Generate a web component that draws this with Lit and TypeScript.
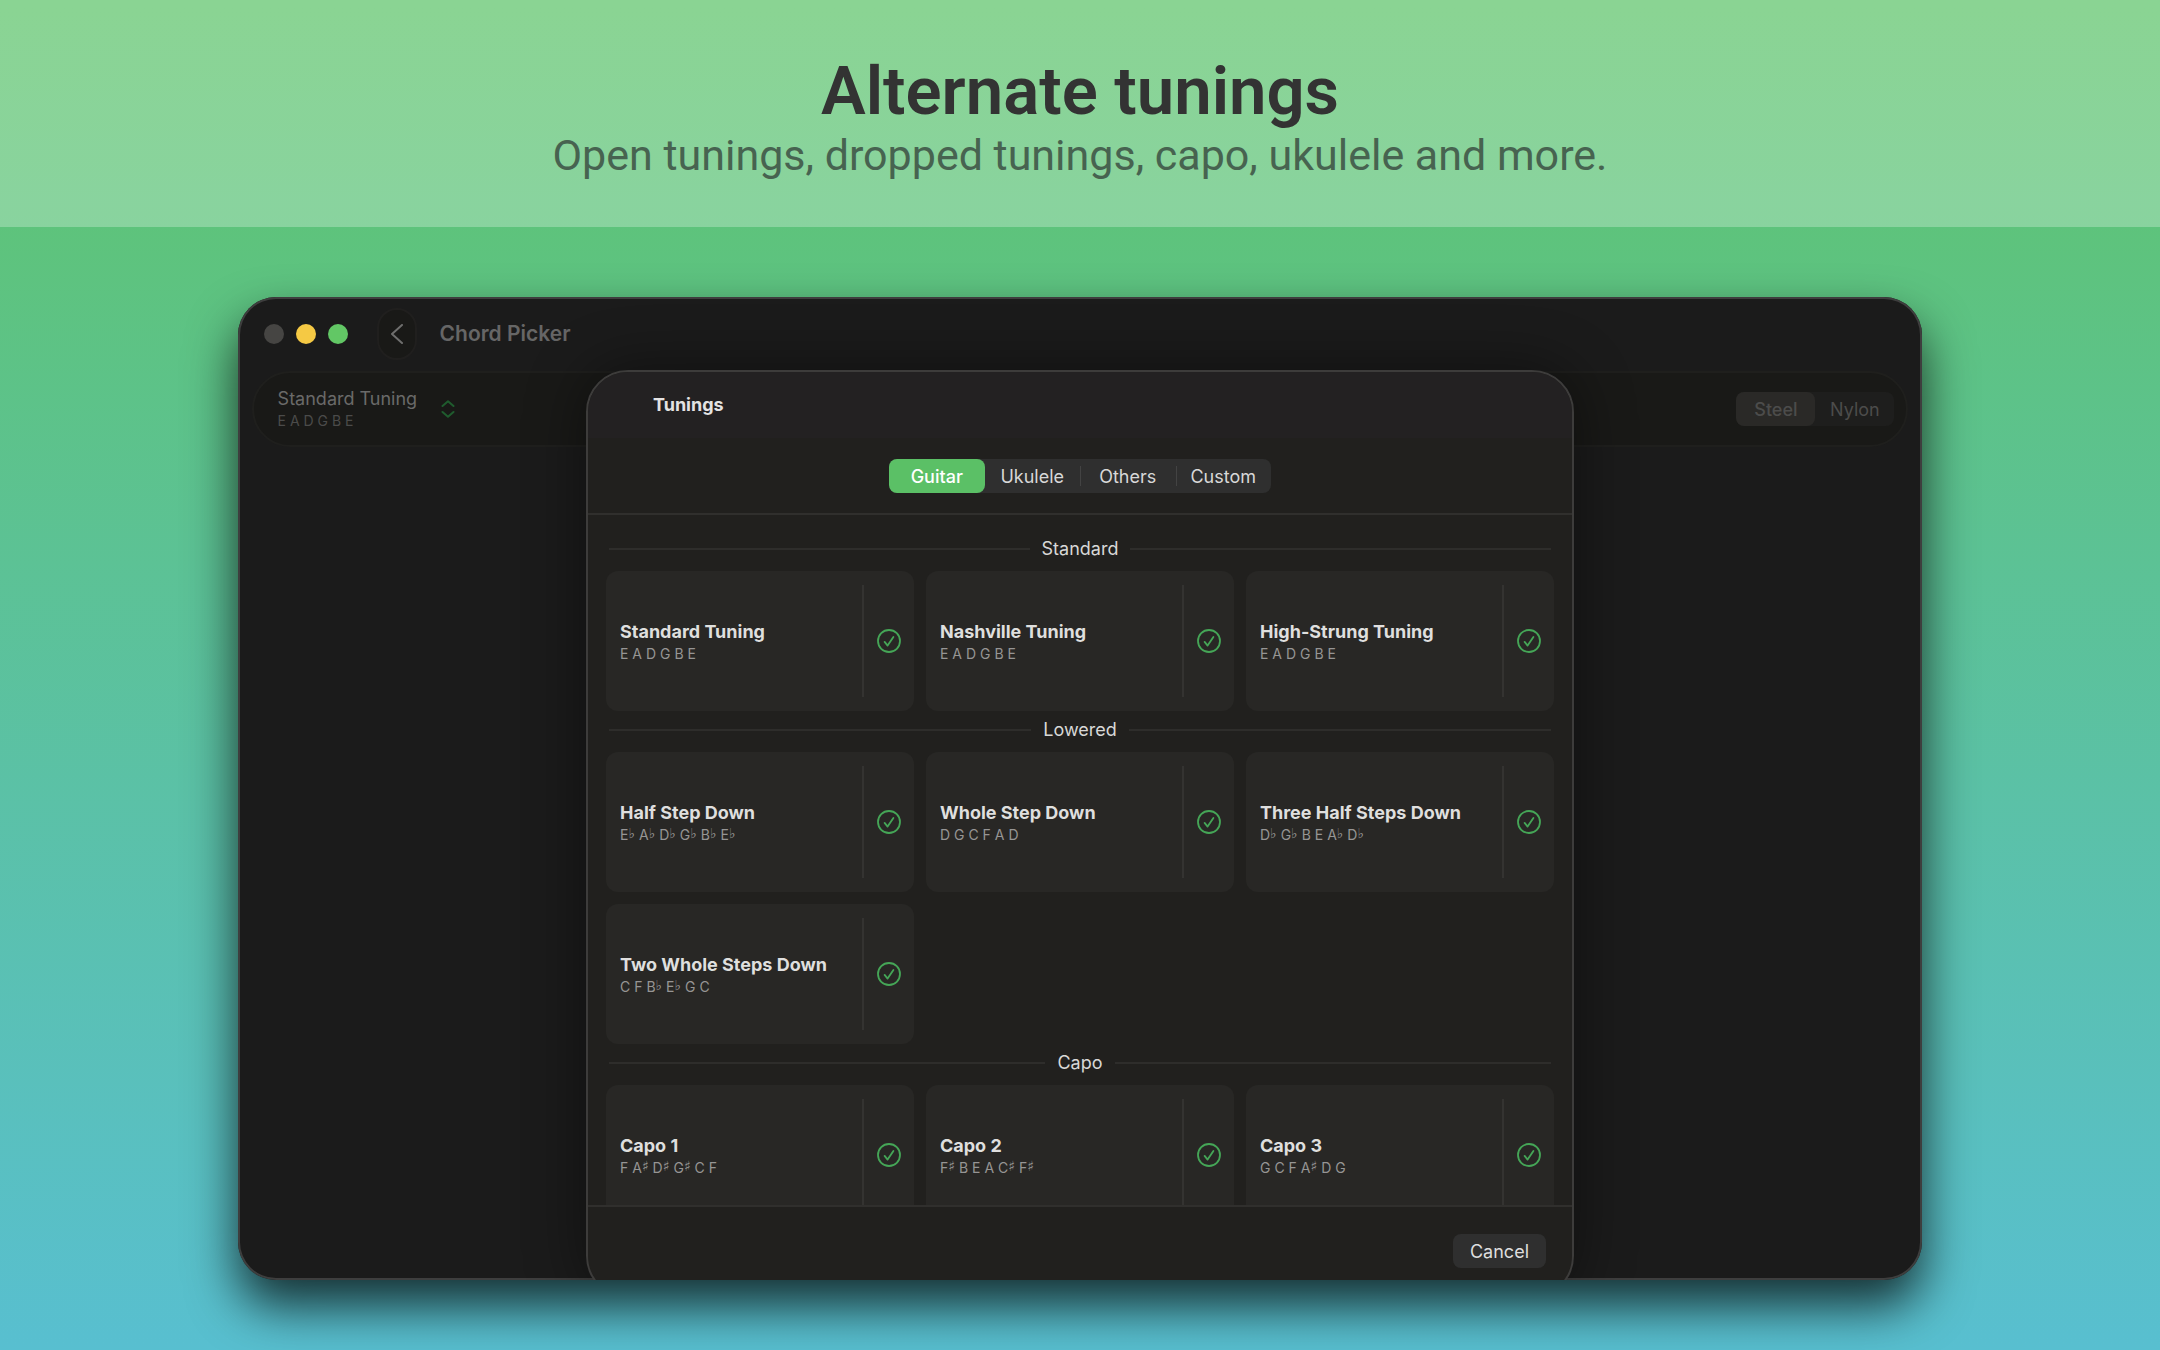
import { LitElement, html, css, svg } from "lit";
import { customElement, property, state } from "lit/decorators.js";
import { classMap } from "lit/directives/class-map.js";

interface Tuning {
  name: string;
  notes: string;
}

interface Section {
  title: string;
  tunings: Tuning[];
}

const SECTIONS: Section[] = [
  {
    title: "Standard",
    tunings: [
      { name: "Standard Tuning", notes: "E A D G B E" },
      { name: "Nashville Tuning", notes: "E A D G B E" },
      { name: "High-Strung Tuning", notes: "E A D G B E" },
    ],
  },
  {
    title: "Lowered",
    tunings: [
      { name: "Half Step Down", notes: "E♭ A♭ D♭ G♭ B♭ E♭" },
      { name: "Whole Step Down", notes: "D G C F A D" },
      { name: "Three Half Steps Down", notes: "D♭ G♭ B E A♭ D♭" },
      { name: "Two Whole Steps Down", notes: "C F B♭ E♭ G C" },
    ],
  },
  {
    title: "Capo",
    tunings: [
      { name: "Capo 1", notes: "F A♯ D♯ G♯ C F" },
      { name: "Capo 2", notes: "F♯ B E A C♯ F♯" },
      { name: "Capo 3", notes: "G C F A♯ D G" },
    ],
  },
];

const checkIcon = svg`<circle cx="12" cy="12" r="11" /><path d="M7.6 12.9 L10.6 16.6 L16.4 7.9" />`;

@customElement("tuning-notes")
export class TuningNotes extends LitElement {
  @property() notes = "";

  static styles = css`
    :host {
      display: block;
      font-size: 14px;
      line-height: 22px;
    }
    .accidental {
      font-family: "DejaVu Sans", sans-serif;
      font-size: 14px;
      font-weight: 700;
      line-height: 1;
      vertical-align: 2px;
    }
  `;

  render() {
    return html`${[...this.notes].map((c) =>
      c === "♭" || c === "♯" ? html`<span class="accidental">${c}</span>` : c
    )}`;
  }
}

@customElement("tuning-card")
export class TuningCard extends LitElement {
  @property({ attribute: false }) tuning!: Tuning;

  static styles = css`
    :host {
      display: flex;
      height: 140px;
      padding: 14px 0;
      box-sizing: border-box;
      border-radius: 12px;
      background: #282725;
    }
    button {
      border: 0;
      margin: 0;
      background: none;
      font: inherit;
      color: inherit;
    }
    .open {
      flex: 1;
      min-width: 0;
      padding: 4px 14px 0;
      text-align: left;
    }
    .name {
      display: block;
      font-size: 18px;
      line-height: 22px;
      font-weight: 700;
      color: #dfdfde;
      white-space: nowrap;
    }
    tuning-notes {
      color: #969594;
    }
    .choose {
      width: 52px;
      padding: 0;
      border-left: 2px solid #343331;
      display: grid;
      place-items: center;
    }
    svg {
      width: 24px;
      height: 24px;
      fill: none;
      stroke: #45a657;
      stroke-width: 1.8;
      stroke-linecap: round;
      stroke-linejoin: round;
    }
  `;

  render() {
    const { name, notes } = this.tuning;
    return html`
      <button class="open">
        <span class="name">${name}</span>
        <tuning-notes .notes=${notes}></tuning-notes>
      </button>
      <button class="choose" aria-label="Choose ${name}">
        <svg viewBox="0 0 24 24" aria-hidden="true">${checkIcon}</svg>
      </button>
    `;
  }
}

@customElement("segmented-control")
export class SegmentedControl extends LitElement {
  @property({ attribute: false }) options: string[] = [];
  @property() label = "";
  @property() value = "";
  @property({ reflect: true }) tone = "accent";

  static styles = css`
    :host {
      display: block;
    }
    fieldset {
      display: grid;
      grid-auto-flow: column;
      grid-auto-columns: 1fr;
      height: 34px;
      margin: 0;
      padding: 0;
      border: 0;
      min-width: 0;
      border-radius: 8px;
      background: #2f2f2f;
    }
    .segment {
      position: relative;
      display: grid;
      place-items: center;
      padding-top: 2px;
      border-radius: 8px;
      font-size: 18px;
      line-height: 22px;
      color: #d8d8d8;
    }
    input {
      position: absolute;
      inset: 0;
      margin: 0;
      opacity: 0;
    }
    .selected {
      background: #5bc066;
      color: #ffffff;
      font-weight: 500;
    }
    .divided::before {
      content: "";
      position: absolute;
      left: 0;
      top: 7px;
      bottom: 7px;
      width: 1px;
      background: #434343;
    }
    :host([tone="muted"]) fieldset {
      background: #1e1e1d;
    }
    :host([tone="muted"]) .segment {
      color: #4c4c4b;
    }
    :host([tone="muted"]) .selected {
      background: #2a2927;
    }
  `;

  private pick(option: string) {
    this.value = option;
  }

  render() {
    const current = this.options.indexOf(this.value);
    return html`<fieldset aria-label=${this.label}>
      ${this.options.map(
        (option, i) => html`<label
          class=${classMap({
            segment: true,
            selected: i === current,
            divided: i > 0 && i !== current && i !== current + 1,
          })}
        >
          <input
            type="radio"
            name="segment"
            .checked=${i === current}
            @change=${() => this.pick(option)}
          />${option}</label
        >`
      )}
    </fieldset>`;
  }
}

@customElement("tunings-sheet")
export class TuningsSheet extends LitElement {
  @state() private group = "Guitar";

  static styles = css`
    :host {
      display: flex;
      flex-direction: column;
      box-sizing: border-box;
      border: 2px solid #3d3c3b;
      border-radius: 42px;
      background: #21201e;
      overflow: hidden;
      box-shadow: 0 0 60px rgba(0, 0, 0, 0.45);
    }
    .title {
      margin: 0;
      padding: 22px 65px;
      background: #232122;
      font-size: 18px;
      line-height: 22px;
      font-weight: 700;
      color: #e4e3e3;
    }
    .picker {
      display: flex;
      justify-content: center;
      padding: 21px 0 20px;
      border-bottom: 2px solid #302f2d;
    }
    .groups {
      width: 382px;
    }
    .list {
      flex: 1;
      min-height: 0;
      overflow: hidden auto;
      scrollbar-width: none;
      padding: 15px 18px 0;
    }
    .heading {
      display: flex;
      align-items: center;
      gap: 12px;
      height: 37px;
      margin: 0;
      padding: 0 3px 4px;
      font-size: 18px;
      line-height: 22px;
      font-weight: 400;
      color: #d8d8d7;
    }
    .heading::before,
    .heading::after {
      content: "";
      flex: 1;
      height: 2px;
      background: #2e2d2b;
    }
    .cards {
      display: grid;
      grid-template-columns: repeat(3, 1fr);
      gap: 12px;
    }
    .footer {
      display: flex;
      justify-content: flex-end;
      padding: 27px 26px 28px;
      border-top: 2px solid #302f2d;
    }
    .cancel {
      height: 34px;
      padding: 2px 17px 0;
      border: 0;
      border-radius: 8px;
      background: #2f2f2f;
      color: #dedede;
      font: inherit;
      font-size: 18px;
      line-height: 22px;
    }
  `;

  render() {
    return html`
      <h2 class="title">Tunings</h2>
      <div class="picker">
        <segmented-control
          class="groups"
          label="Instrument"
          .options=${["Guitar", "Ukulele", "Others", "Custom"]}
          .value=${this.group}
        ></segmented-control>
      </div>
      <div class="list">
        ${SECTIONS.map(
          (s) => html`<section>
            <h3 class="heading">${s.title}</h3>
            <div class="cards">
              ${s.tunings.map((t) => html`<tuning-card .tuning=${t}></tuning-card>`)}
            </div>
          </section>`
        )}
      </div>
      <div class="footer"><button class="cancel">Cancel</button></div>
    `;
  }
}

@customElement("app-root")
export class AppRoot extends LitElement {
  static styles = css`
    :host {
      display: flex;
      flex-direction: column;
      height: 100vh;
      overflow: hidden;
      font-family: Inter, "Liberation Sans", sans-serif;
      background: linear-gradient(#5fc46b, #58bfd0);
    }
    .banner {
      padding: 53px 0 45px;
      text-align: center;
      font-family: Roboto, "Liberation Sans", sans-serif;
      background: rgba(255, 255, 255, 0.27);
    }
    .headline {
      margin: 0;
      font-size: 67px;
      line-height: 76px;
      font-weight: 600;
      color: #333333;
    }
    .tagline {
      margin: 0;
      font-size: 43px;
      line-height: 53px;
      color: #476350;
    }
    .stage {
      flex: 1;
      min-height: 0;
      display: flex;
      padding: 70px 11%;
    }
    .window {
      position: relative;
      flex: 1;
      min-width: 0;
      overflow: hidden;
      border-radius: 38px;
      background: #1b1b1b;
      box-shadow: inset 0 0 0 2px #3e3e3e, 0 26px 50px rgba(0, 0, 0, 0.75);
    }
    .titlebar {
      display: flex;
      align-items: center;
      height: 74px;
      padding-left: 26px;
    }
    .lights {
      display: flex;
      gap: 12px;
      margin-right: 29px;
    }
    .light {
      width: 20px;
      height: 20px;
      border-radius: 50%;
      background: #464543;
    }
    .minimize {
      background: #f5c944;
    }
    .zoom {
      background: #62c765;
    }
    .back {
      display: grid;
      place-items: center;
      width: 40px;
      height: 52px;
      margin-right: 23px;
      padding: 0;
      border: 2px solid #201f1e;
      border-radius: 20px;
      background: #191917;
    }
    .back-icon {
      width: 14px;
      height: 20px;
      fill: none;
      stroke: #6e6e6d;
      stroke-width: 2;
      stroke-linecap: round;
      stroke-linejoin: round;
    }
    .window-title {
      margin: 0;
      font-size: 21px;
      line-height: 26px;
      font-weight: 600;
      color: #666666;
    }
    .toolbar {
      display: flex;
      align-items: center;
      justify-content: space-between;
      height: 76px;
      margin: 0 14px;
      padding: 0 12px 0 24px;
      box-sizing: border-box;
      border: 2px solid #1f1f1d;
      border-radius: 38px;
      background: #191917;
    }
    .current {
      display: flex;
      align-items: center;
      gap: 24px;
      padding: 0;
      border: 0;
      background: none;
      font: inherit;
      text-align: left;
    }
    .current-name {
      display: block;
      padding-top: 2px;
      font-size: 18px;
      line-height: 22px;
      color: #6a6a69;
    }
    .current-notes {
      color: #4b4b4a;
    }
    .updown {
      width: 14px;
      height: 18px;
      fill: none;
      stroke: #1f5c2e;
      stroke-width: 2;
      stroke-linecap: round;
      stroke-linejoin: round;
    }
    .strings {
      width: 158px;
    }
    .sheet {
      position: absolute;
      top: 73px;
      bottom: -18px;
      left: 50%;
      width: min(988px, 90%);
      transform: translateX(-50%);
    }
  `;

  render() {
    return html`
      <header class="banner">
        <h1 class="headline">Alternate tunings</h1>
        <p class="tagline">Open tunings, dropped tunings, capo, ukulele and more.</p>
      </header>
      <main class="stage">
        <div class="window">
          <div class="titlebar">
            <div class="lights">
              <span class="light"></span>
              <span class="light minimize"></span>
              <span class="light zoom"></span>
            </div>
            <button class="back" aria-label="Back">
              <svg class="back-icon" viewBox="0 0 14 20" aria-hidden="true">
                <path d="M12 1 L2 10 L12 19" />
              </svg>
            </button>
            <h2 class="window-title">Chord Picker</h2>
          </div>
          <div class="toolbar">
            <button class="current" aria-haspopup="dialog">
              <span>
                <span class="current-name">Standard Tuning</span>
                <tuning-notes class="current-notes" .notes=${"E A D G B E"}></tuning-notes>
              </span>
              <svg class="updown" viewBox="0 0 14 18" aria-hidden="true">
                <path d="M1.500 6 L7 1.200 L12.500 6 M1.500 12 L7 16.800 L12.500 12" />
              </svg>
            </button>
            <segmented-control
              class="strings"
              label="Strings"
              tone="muted"
              .options=${["Steel", "Nylon"]}
              .value=${"Steel"}
            ></segmented-control>
          </div>
          <tunings-sheet class="sheet" role="dialog" aria-label="Tunings"></tunings-sheet>
        </div>
      </main>
    `;
  }
}
